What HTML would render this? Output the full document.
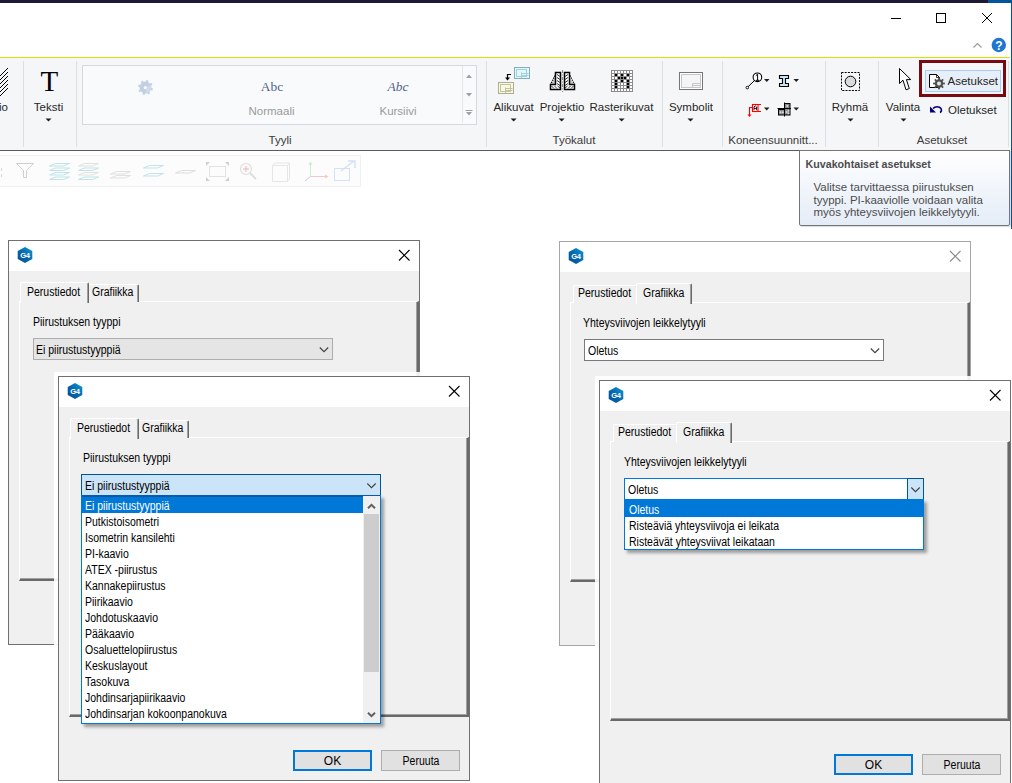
<!DOCTYPE html><html><head><meta charset="utf-8"><style>
html,body{margin:0;padding:0;}
body{width:1012px;height:783px;overflow:hidden;position:relative;background:#fff;font-family:"Liberation Sans",sans-serif;}
.a{position:absolute;white-space:nowrap;}
.dt{transform:scaleX(.875);transform-origin:0 0;}
svg{position:absolute;overflow:visible;}
</style></head><body>
<div class="a" style="left:0px;top:0px;width:988px;height:3px;background:#1c1a38;"></div>
<div class="a" style="left:988px;top:0px;width:24px;height:3px;background:#00559f;"></div>
<div class="a" style="left:1011px;top:0px;width:1px;height:229px;background:#00559f;"></div>
<svg style="left:0;top:0" width="1012" height="60"><line x1="891" y1="18.5" x2="901" y2="18.5" stroke="#000" stroke-width="1"/><rect x="936.5" y="13.5" width="9" height="9" fill="none" stroke="#000" stroke-width="1"/><line x1="982" y1="13" x2="992" y2="23" stroke="#000" stroke-width="1"/><line x1="992" y1="13" x2="982" y2="23" stroke="#000" stroke-width="1"/><polyline points="973.5,47.5 977.5,43.5 981.5,47.5" fill="none" stroke="#9a9a9a" stroke-width="1.2"/><circle cx="998.8" cy="45" r="7.2" fill="#1f76cf"/><text x="998.8" y="49.5" font-family="Liberation Sans" font-weight="bold" font-size="12" fill="#fff" text-anchor="middle">?</text></svg>
<div class="a" style="left:0px;top:57px;width:1010px;height:1px;background:#d9e300;"></div>
<div class="a" style="left:0px;top:58px;width:1010px;height:92px;background:#f5f6f7;"></div>
<div class="a" style="left:0px;top:150px;width:1010px;height:1px;background:#5c5c5c;"></div>
<div class="a" style="left:23px;top:61px;width:1px;height:86px;background:#dcdfe3;"></div>
<div class="a" style="left:76px;top:61px;width:1px;height:86px;background:#dcdfe3;"></div>
<div class="a" style="left:486px;top:61px;width:1px;height:86px;background:#dcdfe3;"></div>
<div class="a" style="left:662px;top:61px;width:1px;height:86px;background:#dcdfe3;"></div>
<div class="a" style="left:722px;top:61px;width:1px;height:86px;background:#dcdfe3;"></div>
<div class="a" style="left:825px;top:61px;width:1px;height:86px;background:#dcdfe3;"></div>
<div class="a" style="left:878px;top:61px;width:1px;height:86px;background:#dcdfe3;"></div>
<div class="a" style="left:1008px;top:61px;width:1px;height:86px;background:#dcdfe3;"></div>
<svg style="left:0;top:68" width="9" height="25"><g stroke="#000" stroke-width="1"><line x1="-12" y1="20" x2="8" y2="0"/><line x1="-12" y1="24" x2="8" y2="4"/><line x1="-12" y1="28" x2="8" y2="8"/><line x1="-12" y1="32" x2="8" y2="12"/><line x1="-12" y1="36" x2="8" y2="16"/><line x1="-12" y1="40" x2="8" y2="20"/></g></svg>
<div class="a" style="left:-1px;top:101.02px;font-size:11.5px;line-height:13px;color:#262626;">io</div>
<div class="a" style="left:-50.7px;width:200px;text-align:center;top:64.95px;font-size:29px;line-height:33px;color:#000;font-family:'Liberation Serif',serif;">T</div>
<div class="a" style="left:-51.5px;width:200px;text-align:center;top:100.82px;font-size:11.5px;line-height:13px;color:#262626;">Teksti</div>
<svg style="left:0;top:0" width="1" height="1"><polygon points="45.5,118.5 51.5,118.5 48.5,121.5" fill="#1e1e1e"/></svg>
<div class="a" style="left:82px;top:65px;width:395px;height:60px;background:#f9fafc;border:1px solid #d5d9de;box-sizing:border-box;"></div>
<div class="a" style="left:462px;top:66px;width:1px;height:57px;background:#e3e6ea;"></div>
<svg style="left:0;top:0" width="1" height="1"><polygon points="466,78 472,78 469,74.5" fill="#9aa0a8"/><polygon points="466,93 472,93 469,96.5" fill="#9aa0a8"/><line x1="465.5" y1="110.5" x2="472.5" y2="110.5" stroke="#9aa0a8"/><polygon points="466,112 472,112 469,115.5" fill="#9aa0a8"/></svg>
<svg style="left:137px;top:79px" width="17" height="17" viewBox="0 0 16 16"><g fill="#c3cfe2" transform="rotate(15 8 8)"><circle cx="8" cy="8" r="5.6"/><rect x="7" y="1" width="2" height="3.2" transform="rotate(0 8 8)"/><rect x="7" y="1" width="2" height="3.2" transform="rotate(45 8 8)"/><rect x="7" y="1" width="2" height="3.2" transform="rotate(90 8 8)"/><rect x="7" y="1" width="2" height="3.2" transform="rotate(135 8 8)"/><rect x="7" y="1" width="2" height="3.2" transform="rotate(180 8 8)"/><rect x="7" y="1" width="2" height="3.2" transform="rotate(225 8 8)"/><rect x="7" y="1" width="2" height="3.2" transform="rotate(270 8 8)"/><rect x="7" y="1" width="2" height="3.2" transform="rotate(315 8 8)"/></g><path d="M8 8L14 5L12.5 11L9 14Z" fill="#d6def0" opacity=".7"/><circle cx="7.8" cy="8" r="1.5" fill="#f9fafc"/></svg>
<div class="a" style="left:172px;width:200px;text-align:center;top:78.62px;font-size:13.5px;line-height:16px;color:#55658a;font-family:'Liberation Serif',serif;">Abc</div>
<div class="a" style="left:171.5px;width:200px;text-align:center;top:104.52px;font-size:11.5px;line-height:13px;color:#9a9a9a;">Normaali</div>
<div class="a" style="left:298px;width:200px;text-align:center;top:78.62px;font-size:13.5px;line-height:16px;color:#55658a;font-family:'Liberation Serif',serif;font-style:italic;">Abc</div>
<div class="a" style="left:298px;width:200px;text-align:center;top:104.52px;font-size:11.5px;line-height:13px;color:#9a9a9a;">Kursiivi</div>
<div class="a" style="left:180px;width:200px;text-align:center;top:134.02px;font-size:11.5px;line-height:13px;color:#3b3b3b;">Tyyli</div>
<div class="a" style="left:413.6px;width:200px;text-align:center;top:101.02px;font-size:11.5px;line-height:13px;color:#262626;">Alikuvat</div>
<svg style="left:0;top:0" width="1" height="1"><polygon points="510.6,118.5 516.6,118.5 513.6,121.5" fill="#1e1e1e"/></svg>
<div class="a" style="left:462px;width:200px;text-align:center;top:101.02px;font-size:11.5px;line-height:13px;color:#262626;">Projektio</div>
<svg style="left:0;top:0" width="1" height="1"><polygon points="558.6,118.5 564.6,118.5 561.6,121.5" fill="#1e1e1e"/></svg>
<div class="a" style="left:521.5px;width:200px;text-align:center;top:101.02px;font-size:11.5px;line-height:13px;color:#262626;">Rasterikuvat</div>
<svg style="left:0;top:0" width="1" height="1"><polygon points="618.6,118.5 624.6,118.5 621.6,121.5" fill="#1e1e1e"/></svg>
<div class="a" style="left:474px;width:200px;text-align:center;top:134.02px;font-size:11.5px;line-height:13px;color:#3b3b3b;">Työkalut</div>
<div class="a" style="left:591px;width:200px;text-align:center;top:101.02px;font-size:11.5px;line-height:13px;color:#262626;">Symbolit</div>
<svg style="left:0;top:0" width="1" height="1"><polygon points="687.5,118.5 693.5,118.5 690.5,121.5" fill="#1e1e1e"/></svg>
<div class="a" style="left:673px;width:200px;text-align:center;top:134.02px;font-size:11.5px;line-height:13px;color:#3b3b3b;">Koneensuunnitt...</div>
<div class="a" style="left:750px;width:200px;text-align:center;top:101.02px;font-size:11.5px;line-height:13px;color:#262626;">Ryhmä</div>
<svg style="left:0;top:0" width="1" height="1"><polygon points="847.5,118.5 853.5,118.5 850.5,121.5" fill="#1e1e1e"/></svg>
<div class="a" style="left:803px;width:200px;text-align:center;top:101.02px;font-size:11.5px;line-height:13px;color:#262626;">Valinta</div>
<svg style="left:0;top:0" width="1" height="1"><polygon points="900.5,118.5 906.5,118.5 903.5,121.5" fill="#1e1e1e"/></svg>
<div class="a" style="left:842px;width:200px;text-align:center;top:134.02px;font-size:11.5px;line-height:13px;color:#3b3b3b;">Asetukset</div>
<svg style="left:496px;top:65px;" width="36" height="32" viewBox="496 65 36 32"><rect x="514.5" y="67.5" width="15" height="11" fill="#e2f7f9" stroke="#86aeb8"/><rect x="516.5" y="69.5" width="10" height="7" fill="#e2f7f9" stroke="#a4d0de"/><path d="M521.5 73.5H528.5M521.5 75.5H528.5M521.5 72.5V78" stroke="#a4d0de" fill="none"/><rect x="498.5" y="82.5" width="15" height="11" fill="#f8f8e6" stroke="#aeae8a"/><rect x="500.5" y="84.5" width="10" height="7" fill="#f8f8e6" stroke="#c4c49c"/><path d="M505.5 88.5H512.5M505.5 90.5H512.5M505.5 87.5V93" stroke="#c4c49c" fill="none"/><path d="M511 74.5H507.5V78" stroke="#000" stroke-width="1.2" fill="none"/><polygon points="505,77.5 510,77.5 507.5,80.5" fill="#000"/></svg>
<svg style="left:548px;top:68px;" width="30" height="26" viewBox="548 68 30 26"><polygon points="556,74 556,84.5 551,84.5" fill="#c8c8c8"/><path d="M556 73.5L550.5 84.5" stroke="#000" stroke-width="1.2" stroke-dasharray="1.3 1"/><path d="M569 73.5L574.5 84.5" stroke="#000" stroke-width="1.2" stroke-dasharray="1.3 1"/><polygon points="569,74 569,84.5 574,84.5" fill="#c8c8c8"/><path d="M555.5 72.5H560.5V89.5H550.5V84.5H555.5Z" fill="#fff" stroke="#000" stroke-width="1.5"/><path d="M569.5 72.5H564.5V89.5H574.5V84.5H569.5Z" fill="#fff" stroke="#000" stroke-width="1.5"/><path d="M557 74.5l3 2M557 77.5l3 2M557 80.5l3 2M557 83.5l3 2M551.5 86l2.5 2.5M554.5 86l2.5 2.5M557.5 86l2.5 2" stroke="#333" stroke-width="1"/><path d="M568 74.5l-3 2M568 77.5l-3 2M568 80.5l-3 2M568 83.5l-3 2M573.5 86l-2.5 2.5M570.5 86l-2.5 2.5M567.5 86l-2.5 2" stroke="#333" stroke-width="1"/><line x1="562.5" y1="70" x2="562.5" y2="92" stroke="#8a8a8a" stroke-width="1" stroke-dasharray="3 1.5 1 1.5"/></svg>
<svg style="left:611px;top:70px;" width="22" height="22" viewBox="611 70 22 22"><rect x="611" y="70" width="22" height="22" fill="#8c8c8c"/><rect x="612" y="71" width="2" height="2" fill="#fff"/><rect x="615" y="71" width="2" height="2" fill="#fff"/><rect x="618" y="71" width="2" height="2" fill="#fff"/><rect x="621" y="71" width="2" height="2" fill="#fff"/><rect x="624" y="71" width="2" height="2" fill="#fff"/><rect x="627" y="71" width="2" height="2" fill="#fff"/><rect x="630" y="71" width="2" height="2" fill="#fff"/><rect x="612" y="74" width="2" height="2" fill="#fff"/><rect x="615" y="74" width="2" height="2" fill="#000"/><rect x="618" y="74" width="2" height="2" fill="#fff"/><rect x="621" y="74" width="2" height="2" fill="#000"/><rect x="624" y="74" width="2" height="2" fill="#fff"/><rect x="627" y="74" width="2" height="2" fill="#000"/><rect x="630" y="74" width="2" height="2" fill="#fff"/><rect x="612" y="77" width="2" height="2" fill="#fff"/><rect x="615" y="77" width="2" height="2" fill="#fff"/><rect x="618" y="77" width="2" height="2" fill="#000"/><rect x="621" y="77" width="2" height="2" fill="#000"/><rect x="624" y="77" width="2" height="2" fill="#000"/><rect x="627" y="77" width="2" height="2" fill="#fff"/><rect x="630" y="77" width="2" height="2" fill="#fff"/><rect x="612" y="80" width="2" height="2" fill="#fff"/><rect x="615" y="80" width="2" height="2" fill="#000"/><rect x="618" y="80" width="2" height="2" fill="#fff"/><rect x="621" y="80" width="2" height="2" fill="#000"/><rect x="624" y="80" width="2" height="2" fill="#fff"/><rect x="627" y="80" width="2" height="2" fill="#000"/><rect x="630" y="80" width="2" height="2" fill="#fff"/><rect x="612" y="83" width="2" height="2" fill="#fff"/><rect x="615" y="83" width="2" height="2" fill="#000"/><rect x="618" y="83" width="2" height="2" fill="#fff"/><rect x="621" y="83" width="2" height="2" fill="#fff"/><rect x="624" y="83" width="2" height="2" fill="#fff"/><rect x="627" y="83" width="2" height="2" fill="#000"/><rect x="630" y="83" width="2" height="2" fill="#fff"/><rect x="612" y="86" width="2" height="2" fill="#fff"/><rect x="615" y="86" width="2" height="2" fill="#000"/><rect x="618" y="86" width="2" height="2" fill="#fff"/><rect x="621" y="86" width="2" height="2" fill="#fff"/><rect x="624" y="86" width="2" height="2" fill="#fff"/><rect x="627" y="86" width="2" height="2" fill="#000"/><rect x="630" y="86" width="2" height="2" fill="#fff"/><rect x="612" y="89" width="2" height="2" fill="#fff"/><rect x="615" y="89" width="2" height="2" fill="#fff"/><rect x="618" y="89" width="2" height="2" fill="#fff"/><rect x="621" y="89" width="2" height="2" fill="#fff"/><rect x="624" y="89" width="2" height="2" fill="#fff"/><rect x="627" y="89" width="2" height="2" fill="#fff"/><rect x="630" y="89" width="2" height="2" fill="#fff"/></svg>
<svg style="left:678px;top:71px;" width="26" height="20" viewBox="678 71 26 20"><rect x="679.5" y="72.5" width="23" height="17" fill="#fff" stroke="#767676"/><rect x="681.5" y="74.5" width="19" height="13" fill="#f4f5f7" stroke="#c8c8c8"/><path d="M692.5 87.5V83.5H700.5M692.5 85.5H700.5" stroke="#c8c8c8" fill="none"/></svg>
<svg style="left:744px;top:71px;" width="60" height="50" viewBox="744 71 60 50"><line x1="748" y1="86.8" x2="754.5" y2="80.5" stroke="#000" stroke-width="1"/><circle cx="747.3" cy="87.6" r="1.3" fill="#fff" stroke="#000" stroke-width=".9"/><circle cx="757.4" cy="77.3" r="4.3" fill="#fff" stroke="#000" stroke-width="1.1"/><path d="M755.8 75.6L757.6 74.3V80.3M756 80.3H759.2" fill="none" stroke="#000" stroke-width="1"/><polygon points="764,79 769.5,79 766.75,82" fill="#1e1e1e"/><path d="M779.5 75.5H788.5V78.5H785.5V83.5H788.5V86.5H779.5V83.5H782.5V78.5H779.5Z" fill="#c6e6fa" stroke="#000" stroke-width="1.1"/><polygon points="793.5,79 799,79 796.25,82" fill="#1e1e1e"/><rect x="752.5" y="104.5" width="5.5" height="7" fill="#fff" stroke="#f00" stroke-width="1.1"/><path d="M752 104.5H761M752 111.5H761" stroke="#f00" stroke-width="1.1"/><path d="M752 107.5H749.5V115" stroke="#f00" stroke-width="1.1" fill="none"/><polygon points="747.5,114.5 751.5,114.5 749.5,117" fill="#f00"/><path d="M754 110.2V107L755.3 105.8L756.6 107V110.2M754 108.4H756.6" fill="none" stroke="#000" stroke-width=".9"/><polygon points="764,107.5 769.5,107.5 766.75,110.5" fill="#1e1e1e"/><rect x="778.5" y="109.5" width="6" height="5.5" fill="#8a8a8a" stroke="#000"/><rect x="784.5" y="103.5" width="5.5" height="11.5" fill="#8a8a8a" stroke="#000"/><path d="M777.5 108.5H791M784.5 102.5V116.5" stroke="#000" stroke-width="1"/><g fill="#d8d8d8"><circle cx="780.5" cy="112.2" r="1"/><circle cx="782.8" cy="112.2" r="1"/><circle cx="787.3" cy="106" r="1.1"/><circle cx="786.5" cy="112" r="1"/><circle cx="788.5" cy="110.8" r="1"/><circle cx="788.5" cy="113.2" r="1"/></g><polygon points="793.5,107.5 799,107.5 796.25,110.5" fill="#1e1e1e"/></svg>
<svg style="left:840px;top:71px;" width="22" height="22" viewBox="840 71 22 22"><rect x="841.5" y="72.5" width="18" height="18" fill="none" stroke="#000" stroke-width="1" stroke-dasharray="2 1.2"/><circle cx="850.5" cy="81.5" r="5.3" fill="#dadada" stroke="#000" stroke-width="1"/></svg>
<svg style="left:898px;top:67px;" width="15" height="25" viewBox="898 67 15 25"><path d="M899.5 68.5V83.5L903 80.2L906 89.8L909.3 88.6L906.4 79.6H910.8Z" fill="#fff" stroke="#000" stroke-width="1" stroke-linejoin="round"/></svg>
<div class="a" style="left:919px;top:60px;width:87px;height:37px;border:3px solid #7a0a12;box-sizing:border-box;"></div>
<div class="a" style="left:925px;top:70px;width:76px;height:22px;background:#e8eff8;border:1px solid #a8cdf3;box-sizing:border-box;"></div>
<svg style="left:927px;top:72px;" width="20" height="20" viewBox="927 72 20 20"><path d="M929.5 74.5H936.5L939.5 77.5V87.5H929.5Z" fill="#fff" stroke="#000" stroke-width="1"/><path d="M936.5 74.5V77.5H939.5" fill="none" stroke="#000" stroke-width=".8"/><rect x="938.1" y="77.6" width="1.8" height="2.6" fill="#505050" transform="rotate(0 939 83.5)"/><rect x="938.1" y="77.6" width="1.8" height="2.6" fill="#505050" transform="rotate(45 939 83.5)"/><rect x="938.1" y="77.6" width="1.8" height="2.6" fill="#505050" transform="rotate(90 939 83.5)"/><rect x="938.1" y="77.6" width="1.8" height="2.6" fill="#505050" transform="rotate(135 939 83.5)"/><rect x="938.1" y="77.6" width="1.8" height="2.6" fill="#505050" transform="rotate(180 939 83.5)"/><rect x="938.1" y="77.6" width="1.8" height="2.6" fill="#505050" transform="rotate(225 939 83.5)"/><rect x="938.1" y="77.6" width="1.8" height="2.6" fill="#505050" transform="rotate(270 939 83.5)"/><rect x="938.1" y="77.6" width="1.8" height="2.6" fill="#505050" transform="rotate(315 939 83.5)"/><circle cx="939" cy="83.5" r="4.2" fill="#505050"/><circle cx="939" cy="83.5" r="2" fill="#e8e8e8"/></svg>
<svg style="left:928px;top:104px;" width="16" height="10" viewBox="928 104 16 10"><path d="M933 108.5C935 106 939.5 106 941 108.5C942 110.5 941 112 940 112.6" fill="none" stroke="#000080" stroke-width="1.5"/><polygon points="930,106.5 930,112.6 936,112.6" fill="#000080"/></svg>
<div class="a" style="left:947.5px;top:74.52px;font-size:11.5px;line-height:13px;color:#262626;">Asetukset</div>
<div class="a" style="left:948px;top:103.52px;font-size:11.5px;line-height:13px;color:#262626;">Oletukset</div>
<div class="a" style="left:0px;top:155px;width:361px;height:32px;background:#fcfcfd;border:1px solid #eef0f2;box-sizing:border-box;border-left:none;"></div>
<svg style="left:0;top:0" width="1012" height="200"><path d="M1.5 168V171M1.5 174V177" stroke="#d6d6d6"/><path d="M16.5 163.5H33.5L26.5 170.5V177.5H23.5V170.5Z" fill="none" stroke="#cfcfcf" stroke-width="1"/><polygon points="55.5,163.5 69.5,163.5 63.5,166.0 49.5,166.0" fill="none" stroke="#bfe3e8" stroke-width="1"/><polygon points="55.5,168.0 69.5,168.0 63.5,170.5 49.5,170.5" fill="none" stroke="#bfe3e8" stroke-width="1"/><polygon points="55.5,172.5 69.5,172.5 63.5,175.0 49.5,175.0" fill="none" stroke="#bfe3e8" stroke-width="1"/><polygon points="55.5,177.0 69.5,177.0 63.5,179.5 49.5,179.5" fill="none" stroke="#bfe3e8" stroke-width="1"/><polygon points="84.5,163.5 98.5,163.5 92.5,166.0 78.5,166.0" fill="none" stroke="#e2e2e2" stroke-width="1"/><polygon points="84.5,168.0 98.5,168.0 92.5,170.5 78.5,170.5" fill="none" stroke="#bfe3e8" stroke-width="1"/><polygon points="84.5,172.5 98.5,172.5 92.5,175.0 78.5,175.0" fill="none" stroke="#e2e2e2" stroke-width="1"/><polygon points="84.5,177.0 98.5,177.0 92.5,179.5 78.5,179.5" fill="none" stroke="#bfe3e8" stroke-width="1"/><polygon points="116.5,171.5 130.5,171.5 124.5,174.0 110.5,174.0" fill="none" stroke="#e0e0e0" stroke-width="1"/><polygon points="116.5,175.5 130.5,175.5 124.5,178.0 110.5,178.0" fill="none" stroke="#e0e0e0" stroke-width="1"/><polygon points="149.5,165.5 163.5,165.5 157.5,168.0 143.5,168.0" fill="none" stroke="#bfe3e8" stroke-width="1"/><polygon points="149.5,173.5 163.5,173.5 157.5,176.0 143.5,176.0" fill="none" stroke="#bfe3e8" stroke-width="1"/><polygon points="181.5,170.5 195.5,170.5 189.5,173.0 175.5,173.0" fill="none" stroke="#dedede" stroke-width="1"/><rect x="209.5" y="166.5" width="16" height="10" fill="none" stroke="#e2e2e2"/><path d="M206 162H210L206 166ZM229 162H225L229 166ZM206 181H210L206 177ZM229 181H225L229 177Z" fill="#cfcfcf"/><circle cx="246" cy="169" r="5.5" fill="none" stroke="#dcdcdc" stroke-width="1.1"/><path d="M243 169H249M246 166V172" stroke="#eec8c8" stroke-width="1.4"/><path d="M250 173L256 179" stroke="#dcdcdc" stroke-width="1.8"/><path d="M272.5 165.5H287.5V181.5H272.5ZM272.5 165.5L275 163H289.5V179L287.5 181.5M287.5 165.5L289.5 163" fill="none" stroke="#e6e6e6"/><path d="M310.5 163V176.5" fill="none" stroke="#c9eecb" stroke-width="1"/><path d="M310.5 176.5H327" fill="none" stroke="#f2c8c8" stroke-width="1"/><path d="M310.5 176.5L305 181" fill="none" stroke="#c8c8f2" stroke-width="1"/><polygon points="308.5,165 312.5,165 310.5,161.5" fill="#c9eecb"/><polygon points="325,174.5 325,178.5 328.5,176.5" fill="#f2c8c8"/><rect x="334.5" y="168.5" width="15" height="12" fill="none" stroke="#d2e2f6"/><path d="M341 171L354 161M348 161H355V168" fill="none" stroke="#d2e2f6" stroke-width="1.5"/></svg>
<div class="a" style="left:799px;top:150px;width:211px;height:76px;border:1px solid #767676;box-sizing:border-box;background:linear-gradient(#ffffff,#e4ecf7);border-radius:0 0 2px 2px;box-shadow:1px 1px 1px rgba(0,0,0,.15);"></div>
<div class="a" style="left:805.5px;top:157.79px;font-size:10.7px;line-height:12px;color:#4c4c4c;font-weight:bold;">Kuvakohtaiset asetukset</div>
<div class="a" style="left:813.5px;top:180.72px;font-size:11.5px;line-height:13px;color:#4c4c4c;">Valitse tarvittaessa piirustuksen</div>
<div class="a" style="left:813.5px;top:193.52px;font-size:11.5px;line-height:13px;color:#4c4c4c;">tyyppi. PI-kaaviolle voidaan valita</div>
<div class="a" style="left:813.5px;top:206.22px;font-size:11.5px;line-height:13px;color:#4c4c4c;">myös yhteysviivojen leikkelytyyli.</div>
<div class="a" style="left:8px;top:240px;width:412px;height:405px;background:#f0f0f0;border:1px solid #707070;box-sizing:border-box;box-shadow:0 0 0 4px rgba(255,255,255,.9);"></div>
<div class="a" style="left:9px;top:241px;width:410px;height:30px;background:#fff;"></div>
<svg style="left:17px;top:247px" width="16" height="16" viewBox="0 0 16 16"><defs><linearGradient id="g4g" x1="1" y1="0" x2="0" y2="1"><stop offset="0" stop-color="#0a9ad8"/><stop offset="0.6" stop-color="#0560a8"/><stop offset="1" stop-color="#0a4f9a"/></linearGradient></defs><polygon points="8,0 15.3,4 15.3,12 8,16 0.7,12 0.7,4" fill="url(#g4g)"/><text x="8" y="10.7" font-family="Liberation Sans" font-weight="bold" font-size="7.6" fill="#fff" text-anchor="middle" letter-spacing="-0.3">G4</text></svg>
<svg style="left:0;top:0" width="1" height="1"><g stroke="#000" stroke-width="1.1"><line x1="399" y1="250" x2="409.5" y2="260.5"/><line x1="409.5" y1="250" x2="399" y2="260.5"/></g></svg>
<div class="a" style="left:19px;top:301px;width:400px;height:280px;box-sizing:border-box;border-top:1px solid #fff;border-left:1px solid #fff;border-right:2px solid #696969;border-bottom:2px solid #696969;box-shadow:inset -1px -1px 0 #a0a0a0;"></div>
<div class="a" style="left:20px;top:282px;width:69px;height:21px;background:#f0f0f0;box-sizing:border-box;border-top:1px solid #fff;border-left:1px solid #fff;border-right:1px solid #696969;box-shadow:inset -1px 0 0 #a0a0a0;border-radius:2px 2px 0 0;z-index:1;"></div>
<div class="a" style="left:87px;top:284px;width:52px;height:18px;background:#f0f0f0;box-sizing:border-box;border-top:1px solid #fff;border-left:1px solid #fff;border-right:1px solid #696969;box-shadow:inset -1px 0 0 #a0a0a0;border-radius:2px 2px 0 0;"></div>
<div class="a" style="left:27.3px;top:284.54px;font-size:12px;line-height:14px;color:#000;z-index:2;"><span class="dt" style="display:inline-block">Perustiedot</span></div>
<div class="a" style="left:91.6px;top:284.54px;font-size:12px;line-height:14px;color:#000;z-index:2;"><span class="dt" style="display:inline-block">Grafiikka</span></div>
<div class="a" style="left:243px;top:614px;width:79px;height:21px;border:2px solid #0078d7;background:#e1e1e1;box-sizing:border-box;"></div>
<div class="a" style="left:182.5px;width:200px;text-align:center;top:617.54px;font-size:12px;line-height:14px;color:#000;">OK</div>
<div class="a" style="left:331px;top:614px;width:79px;height:21px;border:1px solid #adadad;background:#e1e1e1;box-sizing:border-box;"></div>
<div class="a" style="left:270.5px;width:200px;text-align:center;top:617.54px;font-size:12px;line-height:14px;color:#000;transform:scaleX(.875);">Peruuta</div>
<div class="a" style="left:32.5px;top:314.84px;font-size:12px;line-height:14px;color:#000;"><span class="dt" style="display:inline-block">Piirustuksen tyyppi</span></div>
<div class="a" style="left:33px;top:338px;width:300px;height:22px;background:#e5e5e5;border:1px solid #adadad;box-sizing:border-box;"></div>
<div class="a" style="left:36.3px;top:342.84px;font-size:12px;line-height:14px;color:#000;"><span class="dt" style="display:inline-block">Ei piirustustyyppiä</span></div>
<svg style="left:0;top:0" width="1" height="1"><polyline points="319.8,347.5 324,351.7 328.2,347.5" fill="none" stroke="#404040" stroke-width="1.1"/></svg>
<div class="a" style="left:559px;top:241px;width:412px;height:405px;background:#f0f0f0;border:1px solid #a6a6a6;box-sizing:border-box;box-shadow:0 0 0 4px rgba(255,255,255,.9);"></div>
<div class="a" style="left:560px;top:242px;width:410px;height:30px;background:#fff;"></div>
<svg style="left:568px;top:248px" width="16" height="16" viewBox="0 0 16 16"><defs><linearGradient id="g4g" x1="1" y1="0" x2="0" y2="1"><stop offset="0" stop-color="#0a9ad8"/><stop offset="0.6" stop-color="#0560a8"/><stop offset="1" stop-color="#0a4f9a"/></linearGradient></defs><polygon points="8,0 15.3,4 15.3,12 8,16 0.7,12 0.7,4" fill="url(#g4g)"/><text x="8" y="10.7" font-family="Liberation Sans" font-weight="bold" font-size="7.6" fill="#fff" text-anchor="middle" letter-spacing="-0.3">G4</text></svg>
<svg style="left:0;top:0" width="1" height="1"><g stroke="#8a8a8a" stroke-width="1.1"><line x1="950" y1="251" x2="960.5" y2="261.5"/><line x1="960.5" y1="251" x2="950" y2="261.5"/></g></svg>
<div class="a" style="left:570px;top:302px;width:400px;height:280px;box-sizing:border-box;border-top:1px solid #fff;border-left:1px solid #fff;border-right:2px solid #696969;border-bottom:2px solid #696969;box-shadow:inset -1px -1px 0 #a0a0a0;"></div>
<div class="a" style="left:573px;top:285px;width:65px;height:18px;background:#f0f0f0;box-sizing:border-box;border-top:1px solid #fff;border-left:1px solid #fff;border-right:1px solid #696969;box-shadow:inset -1px 0 0 #a0a0a0;border-radius:2px 2px 0 0;"></div>
<div class="a" style="left:636px;top:283px;width:56px;height:21px;background:#f0f0f0;box-sizing:border-box;border-top:1px solid #fff;border-left:1px solid #fff;border-right:1px solid #696969;box-shadow:inset -1px 0 0 #a0a0a0;border-radius:2px 2px 0 0;z-index:1;"></div>
<div class="a" style="left:578.3px;top:285.54px;font-size:12px;line-height:14px;color:#000;z-index:2;"><span class="dt" style="display:inline-block">Perustiedot</span></div>
<div class="a" style="left:642.6px;top:285.54px;font-size:12px;line-height:14px;color:#000;z-index:2;"><span class="dt" style="display:inline-block">Grafiikka</span></div>
<div class="a" style="left:794px;top:615px;width:79px;height:21px;border:1px solid #adadad;background:#e1e1e1;box-sizing:border-box;"></div>
<div class="a" style="left:733.5px;width:200px;text-align:center;top:618.54px;font-size:12px;line-height:14px;color:#000;">OK</div>
<div class="a" style="left:882px;top:615px;width:79px;height:21px;border:1px solid #adadad;background:#e1e1e1;box-sizing:border-box;"></div>
<div class="a" style="left:821.5px;width:200px;text-align:center;top:618.54px;font-size:12px;line-height:14px;color:#000;transform:scaleX(.875);">Peruuta</div>
<div class="a" style="left:582.5px;top:315.84px;font-size:12px;line-height:14px;color:#000;"><span class="dt" style="display:inline-block">Yhteysviivojen leikkelytyyli</span></div>
<div class="a" style="left:584px;top:339px;width:300px;height:22px;background:#fff;border:1px solid #7a7a7a;box-sizing:border-box;"></div>
<div class="a" style="left:587.5px;top:343.84px;font-size:12px;line-height:14px;color:#000;"><span class="dt" style="display:inline-block">Oletus</span></div>
<svg style="left:0;top:0" width="1" height="1"><polyline points="870.8,348.5 875,352.7 879.2,348.5" fill="none" stroke="#404040" stroke-width="1.1"/></svg>
<div class="a" style="left:58px;top:376px;width:412px;height:405px;background:#f0f0f0;border:1px solid #707070;box-sizing:border-box;box-shadow:0 0 0 4px rgba(255,255,255,.9);"></div>
<div class="a" style="left:59px;top:377px;width:410px;height:30px;background:#fff;"></div>
<svg style="left:67px;top:383px" width="16" height="16" viewBox="0 0 16 16"><defs><linearGradient id="g4g" x1="1" y1="0" x2="0" y2="1"><stop offset="0" stop-color="#0a9ad8"/><stop offset="0.6" stop-color="#0560a8"/><stop offset="1" stop-color="#0a4f9a"/></linearGradient></defs><polygon points="8,0 15.3,4 15.3,12 8,16 0.7,12 0.7,4" fill="url(#g4g)"/><text x="8" y="10.7" font-family="Liberation Sans" font-weight="bold" font-size="7.6" fill="#fff" text-anchor="middle" letter-spacing="-0.3">G4</text></svg>
<svg style="left:0;top:0" width="1" height="1"><g stroke="#000" stroke-width="1.1"><line x1="449" y1="386" x2="459.5" y2="396.5"/><line x1="459.5" y1="386" x2="449" y2="396.5"/></g></svg>
<div class="a" style="left:69px;top:437px;width:400px;height:280px;box-sizing:border-box;border-top:1px solid #fff;border-left:1px solid #fff;border-right:2px solid #696969;border-bottom:2px solid #696969;box-shadow:inset -1px -1px 0 #a0a0a0;"></div>
<div class="a" style="left:70px;top:418px;width:69px;height:21px;background:#f0f0f0;box-sizing:border-box;border-top:1px solid #fff;border-left:1px solid #fff;border-right:1px solid #696969;box-shadow:inset -1px 0 0 #a0a0a0;border-radius:2px 2px 0 0;z-index:1;"></div>
<div class="a" style="left:137px;top:420px;width:52px;height:18px;background:#f0f0f0;box-sizing:border-box;border-top:1px solid #fff;border-left:1px solid #fff;border-right:1px solid #696969;box-shadow:inset -1px 0 0 #a0a0a0;border-radius:2px 2px 0 0;"></div>
<div class="a" style="left:77.3px;top:420.54px;font-size:12px;line-height:14px;color:#000;z-index:2;"><span class="dt" style="display:inline-block">Perustiedot</span></div>
<div class="a" style="left:141.6px;top:420.54px;font-size:12px;line-height:14px;color:#000;z-index:2;"><span class="dt" style="display:inline-block">Grafiikka</span></div>
<div class="a" style="left:293px;top:750px;width:79px;height:21px;border:2px solid #0078d7;background:#e1e1e1;box-sizing:border-box;"></div>
<div class="a" style="left:232.5px;width:200px;text-align:center;top:753.54px;font-size:12px;line-height:14px;color:#000;">OK</div>
<div class="a" style="left:381px;top:750px;width:79px;height:21px;border:1px solid #adadad;background:#e1e1e1;box-sizing:border-box;"></div>
<div class="a" style="left:320.5px;width:200px;text-align:center;top:753.54px;font-size:12px;line-height:14px;color:#000;transform:scaleX(.875);">Peruuta</div>
<div class="a" style="left:82.5px;top:450.84px;font-size:12px;line-height:14px;color:#000;"><span class="dt" style="display:inline-block">Piirustuksen tyyppi</span></div>
<div class="a" style="left:81px;top:474px;width:300px;height:22px;background:#cce4f7;border:1px solid #005499;box-sizing:border-box;"></div>
<div class="a" style="left:84.5px;top:478.84px;font-size:12px;line-height:14px;color:#000;"><span class="dt" style="display:inline-block">Ei piirustustyyppiä</span></div>
<svg style="left:0;top:0" width="1" height="1"><polyline points="367.3,483.5 371.5,487.7 375.7,483.5" fill="none" stroke="#404040" stroke-width="1.1"/></svg>
<div class="a" style="left:81px;top:495px;width:300px;height:229px;background:#fff;border:1px solid #0078d7;box-sizing:border-box;box-shadow:3px 3px 3px rgba(0,0,0,.35);z-index:3;"></div>
<div class="a" style="left:82px;top:495px;width:298px;height:2px;background:#0a5aa8;z-index:3;"></div>
<div class="a" style="left:82px;top:497px;width:281px;height:16px;background:#0078d7;z-index:3;"></div>
<div class="a" style="left:85px;top:499.24px;font-size:12px;line-height:14px;color:#fff;z-index:4;"><span class="dt" style="display:inline-block">Ei piirustustyyppiä</span></div>
<div class="a" style="left:85px;top:515.24px;font-size:12px;line-height:14px;color:#000;z-index:4;"><span class="dt" style="display:inline-block">Putkistoisometri</span></div>
<div class="a" style="left:85px;top:531.24px;font-size:12px;line-height:14px;color:#000;z-index:4;"><span class="dt" style="display:inline-block">Isometrin kansilehti</span></div>
<div class="a" style="left:85px;top:547.24px;font-size:12px;line-height:14px;color:#000;z-index:4;"><span class="dt" style="display:inline-block">PI-kaavio</span></div>
<div class="a" style="left:85px;top:563.24px;font-size:12px;line-height:14px;color:#000;z-index:4;"><span class="dt" style="display:inline-block">ATEX -piirustus</span></div>
<div class="a" style="left:85px;top:579.24px;font-size:12px;line-height:14px;color:#000;z-index:4;"><span class="dt" style="display:inline-block">Kannakepiirustus</span></div>
<div class="a" style="left:85px;top:595.24px;font-size:12px;line-height:14px;color:#000;z-index:4;"><span class="dt" style="display:inline-block">Piirikaavio</span></div>
<div class="a" style="left:85px;top:611.24px;font-size:12px;line-height:14px;color:#000;z-index:4;"><span class="dt" style="display:inline-block">Johdotuskaavio</span></div>
<div class="a" style="left:85px;top:627.24px;font-size:12px;line-height:14px;color:#000;z-index:4;"><span class="dt" style="display:inline-block">Pääkaavio</span></div>
<div class="a" style="left:85px;top:643.24px;font-size:12px;line-height:14px;color:#000;z-index:4;"><span class="dt" style="display:inline-block">Osaluettelopiirustus</span></div>
<div class="a" style="left:85px;top:659.24px;font-size:12px;line-height:14px;color:#000;z-index:4;"><span class="dt" style="display:inline-block">Keskuslayout</span></div>
<div class="a" style="left:85px;top:675.24px;font-size:12px;line-height:14px;color:#000;z-index:4;"><span class="dt" style="display:inline-block">Tasokuva</span></div>
<div class="a" style="left:85px;top:691.24px;font-size:12px;line-height:14px;color:#000;z-index:4;"><span class="dt" style="display:inline-block">Johdinsarjapiirikaavio</span></div>
<div class="a" style="left:85px;top:707.24px;font-size:12px;line-height:14px;color:#000;z-index:4;"><span class="dt" style="display:inline-block">Johdinsarjan kokoonpanokuva</span></div>
<div class="a" style="left:363px;top:496px;width:17px;height:227px;background:#f0f0f0;z-index:3;"></div>
<div class="a" style="left:364px;top:514px;width:15px;height:158px;background:#cdcdcd;z-index:3;"></div>
<svg style="left:0;top:0;z-index:4" width="1" height="1"><polyline points="368,508.3 371.5,504.8 375,508.3" fill="none" stroke="#606060" stroke-width="2"/><polyline points="368,712.7 371.5,716.2 375,712.7" fill="none" stroke="#606060" stroke-width="2"/></svg>
<div class="a" style="left:599px;top:380px;width:412px;height:405px;background:#f0f0f0;border:1px solid #707070;box-sizing:border-box;box-shadow:0 0 0 4px rgba(255,255,255,.9);"></div>
<div class="a" style="left:600px;top:381px;width:410px;height:30px;background:#fff;"></div>
<svg style="left:608px;top:387px" width="16" height="16" viewBox="0 0 16 16"><defs><linearGradient id="g4g" x1="1" y1="0" x2="0" y2="1"><stop offset="0" stop-color="#0a9ad8"/><stop offset="0.6" stop-color="#0560a8"/><stop offset="1" stop-color="#0a4f9a"/></linearGradient></defs><polygon points="8,0 15.3,4 15.3,12 8,16 0.7,12 0.7,4" fill="url(#g4g)"/><text x="8" y="10.7" font-family="Liberation Sans" font-weight="bold" font-size="7.6" fill="#fff" text-anchor="middle" letter-spacing="-0.3">G4</text></svg>
<svg style="left:0;top:0" width="1" height="1"><g stroke="#000" stroke-width="1.1"><line x1="990" y1="390" x2="1000.5" y2="400.5"/><line x1="1000.5" y1="390" x2="990" y2="400.5"/></g></svg>
<div class="a" style="left:610px;top:441px;width:400px;height:280px;box-sizing:border-box;border-top:1px solid #fff;border-left:1px solid #fff;border-right:2px solid #696969;border-bottom:2px solid #696969;box-shadow:inset -1px -1px 0 #a0a0a0;"></div>
<div class="a" style="left:613px;top:424px;width:65px;height:18px;background:#f0f0f0;box-sizing:border-box;border-top:1px solid #fff;border-left:1px solid #fff;border-right:1px solid #696969;box-shadow:inset -1px 0 0 #a0a0a0;border-radius:2px 2px 0 0;"></div>
<div class="a" style="left:676px;top:422px;width:56px;height:21px;background:#f0f0f0;box-sizing:border-box;border-top:1px solid #fff;border-left:1px solid #fff;border-right:1px solid #696969;box-shadow:inset -1px 0 0 #a0a0a0;border-radius:2px 2px 0 0;z-index:1;"></div>
<div class="a" style="left:618.3px;top:424.54px;font-size:12px;line-height:14px;color:#000;z-index:2;"><span class="dt" style="display:inline-block">Perustiedot</span></div>
<div class="a" style="left:682.6px;top:424.54px;font-size:12px;line-height:14px;color:#000;z-index:2;"><span class="dt" style="display:inline-block">Grafiikka</span></div>
<div class="a" style="left:834px;top:754px;width:79px;height:21px;border:2px solid #0078d7;background:#e1e1e1;box-sizing:border-box;"></div>
<div class="a" style="left:773.5px;width:200px;text-align:center;top:757.54px;font-size:12px;line-height:14px;color:#000;">OK</div>
<div class="a" style="left:922px;top:754px;width:79px;height:21px;border:1px solid #adadad;background:#e1e1e1;box-sizing:border-box;"></div>
<div class="a" style="left:861.5px;width:200px;text-align:center;top:757.54px;font-size:12px;line-height:14px;color:#000;transform:scaleX(.875);">Peruuta</div>
<div class="a" style="left:623.5px;top:454.84px;font-size:12px;line-height:14px;color:#000;"><span class="dt" style="display:inline-block">Yhteysviivojen leikkelytyyli</span></div>
<div class="a" style="left:624px;top:478px;width:300px;height:22px;background:#fff;border:1px solid #0078d7;box-sizing:border-box;"></div>
<div class="a" style="left:907px;top:478px;width:17px;height:22px;background:#cce4f7;border:1px solid #005499;box-sizing:border-box;"></div>
<div class="a" style="left:628px;top:482.84px;font-size:12px;line-height:14px;color:#000;"><span class="dt" style="display:inline-block">Oletus</span></div>
<svg style="left:0;top:0" width="1" height="1"><polyline points="911.3,487.5 915.5,491.7 919.7,487.5" fill="none" stroke="#404040" stroke-width="1.1"/></svg>
<div class="a" style="left:624px;top:499px;width:300px;height:51px;background:#fff;border:1px solid #0078d7;box-sizing:border-box;box-shadow:3px 3px 3px rgba(0,0,0,.35);z-index:3;"></div>
<div class="a" style="left:625px;top:500px;width:298px;height:17px;background:#0078d7;z-index:3;"></div>
<div class="a" style="left:628.5px;top:502.54px;font-size:12px;line-height:14px;color:#fff;z-index:4;"><span class="dt" style="display:inline-block">Oletus</span></div>
<div class="a" style="left:628.5px;top:518.54px;font-size:12px;line-height:14px;color:#000;z-index:4;"><span class="dt" style="display:inline-block">Risteäviä yhteysviivoja ei leikata</span></div>
<div class="a" style="left:628.5px;top:534.54px;font-size:12px;line-height:14px;color:#000;z-index:4;"><span class="dt" style="display:inline-block">Risteävät yhteysviivat leikataan</span></div>
</body></html>
